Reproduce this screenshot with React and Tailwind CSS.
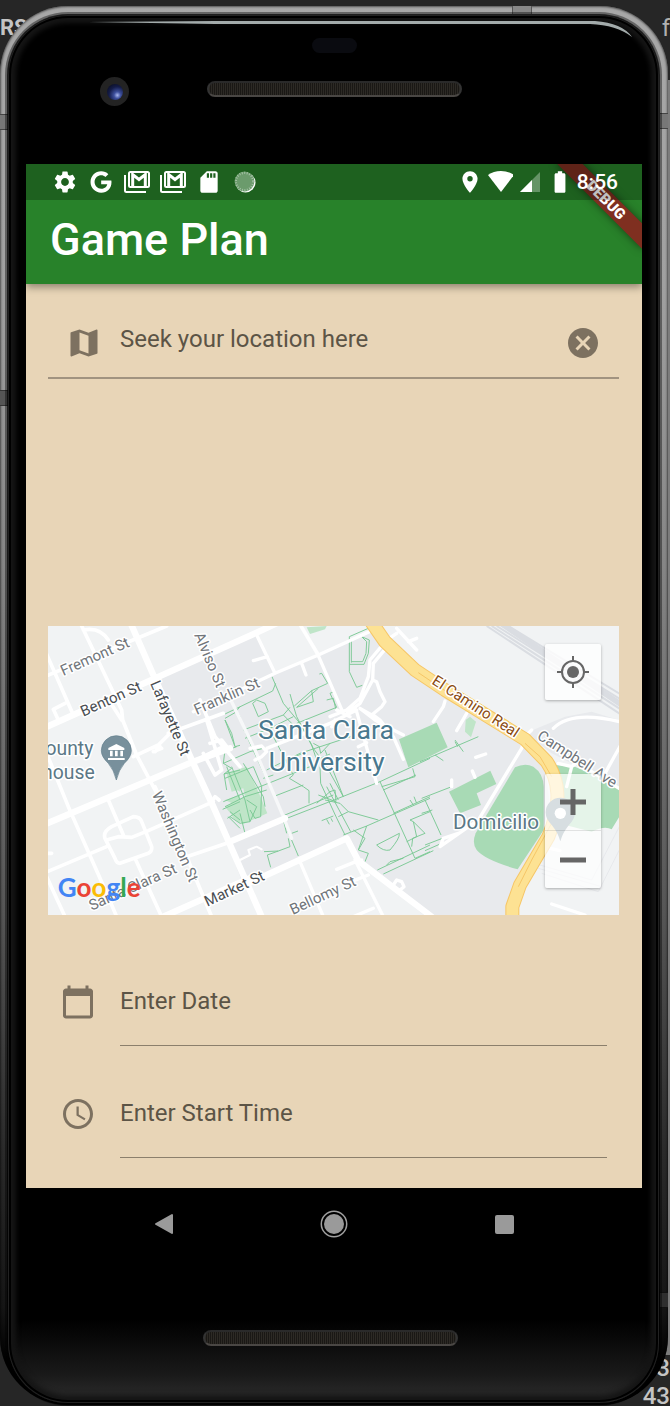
import React from "react";
import {
  MdSettings,
  MdSdCard,
  MdLocationOn,
  MdBatteryFull,
  MdMap,
  MdCancel,
  MdCalendarToday,
  MdAccessTime,
} from "react-icons/md";
import { FaGoogle } from "react-icons/fa";

function GmailStack() {
  return (
    <svg viewBox="0 0 26 22" className="h-[22px] w-[26px] shrink-0">
      <path d="M1 4v15.500q0 1.500 1.500 1.500H22" fill="none" stroke="white" strokeWidth="2" />
      <rect x="5" y="1" width="20" height="15" rx="1.500" fill="none" stroke="white" strokeWidth="2" />
      <path d="M8.700 15V3.500L15 8.500 21.300 3.500V15" fill="none" stroke="white" strokeWidth="3" />
    </svg>
  );
}

function SyncDisc() {
  return (
    <svg viewBox="0 0 26 26" className="h-[26px] w-[26px] shrink-0">
      <circle cx="13.500" cy="13.500" r="10" fill="white" />
      <circle cx="12.500" cy="12.500" r="9.900" fill="#6b9b6c" />
      <circle cx="12.500" cy="12.500" r="8.600" fill="none" stroke="#a4c1a5" strokeWidth="2.200" strokeDasharray="1 1.500" />
    </svg>
  );
}

function StatusBar() {
  return (
    <div className="relative z-10 flex h-9 items-center justify-between bg-black/25 pl-[26px] pr-6 text-white">
      <div className="flex items-center gap-[10px]">
        <MdSettings size={26} />
        <span className="flex w-[26px] justify-center">
          <FaGoogle size={22} />
        </span>
        <GmailStack />
        <GmailStack />
        <MdSdCard size={26} />
        <SyncDisc />
      </div>
      <div className="flex items-center gap-1">
        <MdLocationOn size={26} />
        <svg viewBox="0 0 26 26" className="h-[26px] w-[26px]">
          <path d="M1 6Q6.500 2 14 2T27 6L14 23z" fill="white" />
        </svg>
        <svg viewBox="0 0 26 26" className="h-[26px] w-[26px]">
          <path d="M23 3v20H3z" fill="#659466" />
          <path d="M15 11v12H3z" fill="white" />
        </svg>
        <MdBatteryFull size={26} />
        <span className="text-[21px] font-medium leading-6">8:56</span>
      </div>
    </div>
  );
}

function Header() {
  return (
    <header className="relative z-10 bg-[#28822a] shadow-[0_3px_8px_rgba(0,0,0,0.4)]">
      <div className="absolute inset-0 overflow-hidden">
        <div className="absolute -right-6 top-[27px] h-[18px] w-[120px] rotate-45 bg-[#7f2f20] text-center text-[15px] font-black leading-[18px] text-white shadow-[0_0_9px_rgba(0,0,0,0.5)]">
          DEBUG
        </div>
      </div>
      <StatusBar />
      <h1 className="flex h-[84px] items-center px-6 pb-1 text-[45px] font-medium leading-[52px] text-white">Game Plan</h1>
    </header>
  );
}

function Label({ x, y, r, size = 45, fill = "#70757a", children, anchor = "start" }) {
  return (
    <text
      x={x}
      y={y}
      transform={`rotate(${r || 0} ${x} ${y})`}
      fontSize={size}
      fill={fill}
      stroke="white"
      strokeWidth="9"
      strokeLinejoin="round"
      paintOrder="stroke"
      textAnchor={anchor}
    >
      {children}
    </text>
  );
}

/* The drawing works in thirds of a pixel, split in west, centre and east sheets. */
function CampusMap() {
  return (
    <svg
      viewBox="0 0 1713 867"
      preserveAspectRatio="xMidYMid slice"
      className="block h-full w-full"
      role="img"
      aria-label="Map around Santa Clara University"
    >
      <rect width="1713" height="867" fill="#f1f3f4" />
      <g transform="translate(546 -18)">
        <path
          d="M-232 170L30 62 80 45 135 155 262 105 440 28 600 180 940 390 960 560 850 900H600L385 725 350 655 40 795-20 640-130 400z"
          fill="#e8eaed"
        />
      </g>
      <g transform="translate(1131 -18)">
        <path d="M300 340L420 290 500 275 583 300V520L540 480 380 400z" fill="#e8eaed" />
        <g fill="none" stroke="#dadde2" strokeWidth="6">
          <path d="M185 18L590 285M200 18L590 270M215 18L590 255M232 18L590 240M250 18L590 225" />
        </g>
        <path d="M225 18h30L590 245v20z" fill="#dadde2" />
        <path d="M340 745L530 800M345 735L500 780 583 620M350 760L520 815 583 690" fill="none" stroke="#e2e4e8" strokeWidth="2" />
      </g>

      {/* parks */}
      <g fill="#a8dab5">
        <path transform="translate(1131 -18)" d="M-78 358L35 308 68 382-50 442zM72 515L196 452 214 492 155 520 168 555 105 580z" />
        <path
          transform="translate(1131 -18)"
          d="M270 442Q300 428 325 440 355 460 356 500V630L278 748Q180 720 155 690 140 670 152 640z"
        />
        <path transform="translate(1131 -18)" d="M390 435L450 440 540 480 583 510V590L560 628Q540 615 500 635L400 610z" />
      </g>
      <g fill="#bfe5c8">
        <path transform="translate(1131 -18)" d="M122 300L135 290 153 305 138 352 120 335z" />
        <path transform="translate(546 -18)" d="M230 22L290 18 285 28 240 42z" />
        <path transform="translate(546 -18)" d="M-10 460L50 440 85 515 112 580 40 612 10 590-15 560 45 530 40 505 5 515z" />
        <path transform="translate(-24 -18)" d="M560 455H600V515L580 505zM555 540L600 525V560zM575 590L600 580V610z" />
      </g>

      {/* walking paths */}
      <g transform="translate(546 -18)" fill="none" stroke="#78c892" strokeWidth="2.800">
        <path d="M358 133V50L415 25M364 128V60M358 133H402L415 100 418 60 395 50 410 65 408 100 398 125H364M358 133V155L380 202 397 196" />
        <path d="M-15 282L128 213 137 190M126 170L160 250 210 310 250 385 290 440 340 530M180 222L188 250 200 290 245 375M193 258L245 212 293 190 275 160 268 162M245 212L250 245 200 262 265 205" />
        <path d="M15 262L60 370 135 532M-15 300L5 340 15 380M40 330L160 285 180 262M68 250L85 290 115 275 105 250 80 240 68 250M45 355L120 325 190 290M160 285L215 340M200 310L320 262 300 220 312 215M290 240L310 235 318 270M110 450L210 400 362 350M100 475L130 465M-20 430L60 395 120 380M130 350L190 465 178 475 220 500 237 512V550M160 425L230 395" />
        <path d="M250 370L268 380 272 400 300 370M245 375L260 420 300 402M270 440L272 490 318 590 345 645M290 500L362 635M300 490L325 540M260 550L300 515 315 510 318 545 265 525M285 540L330 550 355 575 445 600" />
        <path d="M-20 545L90 500 240 440M130 530L220 495M165 585L310 525M165 597L325 535 450 485 600 415M285 390L340 530" />
        <path d="M450 485L555 715M455 500L555 470 548 445M460 510L558 465M490 580L600 530M355 575L325 590M340 645L410 618 600 535M370 630L405 655 385 690 415 700 405 725" />
        <path d="M410 618L385 690M440 675L508 640Q510 655 480 690 460 695 440 675M442 750L600 675M460 762L610 692M530 665L560 650 550 605 540 600 600 575M550 605L585 640 548 655 545 680M555 715L600 695M540 540L550 555M552 530L560 550M470 735L480 725 520 715" />
        <path d="M275 602L310 588M290 598L298 613M303 595L308 605M170 625L205 708M185 640L204 633M175 655L180 680 145 693 112 705 122 742M102 695L145 693M155 580L170 640" />
        <path d="M5 440L45 540 60 605M-15 475L70 440 95 500 92 590 75 595 60 570M40 430L100 530 105 560M0 590L30 610 60 605 80 560 50 540M-15 560L45 530 110 510M30 580L45 640" />
      </g>
      <g transform="translate(-24 -18)" fill="none" stroke="#78c892" strokeWidth="2.800">
        <path d="M555 295L585 278 600 260M555 300L585 380 600 376M585 265L600 290M555 390L550 430 575 445 552 462 560 510M590 380L550 395M552 462L600 450M560 440L600 540M548 568L600 545M562 595L600 570M565 590L600 625M570 575L600 600" />
      </g>
      <g transform="translate(1131 -18)" fill="none" stroke="#78c892" strokeWidth="2.800">
        <path d="M-15 425L160 350M90 360L115 395M90 365L98 380M30 405L55 422M-10 535L75 502M0 540L48 645M-10 580L22 570M0 675L52 655M0 692L50 670" />
      </g>

      {/* minor streets */}
      <g transform="translate(-24 -18)" fill="none" stroke="white" strokeWidth="11" strokeLinecap="round" strokeLinejoin="round">
        <path d="M125 18L245 270 248 300 290 405 345 510 360 540M345 500L440 710 515 890M10 80L100 285M130 30Q180 20 205 60M25 165L380 18M40 268L75 250M40 268L55 300M20 400L85 560 200 820 230 890M10 760L200 680M205 540L250 645M20 770L75 890" />
        <path d="M215 620L280 590Q300 590 305 605L335 680Q337 695 325 700L240 730Q230 730 225 715L195 655Q188 635 215 620M200 660L235 650 275 652 325 632 520 545M285 715L365 890M200 230L245 300M440 710L560 670 640 635M515 545L525 530 537 540M280 410L355 375 385 345M20 700H35M385 340L550 280M480 240L525 350 600 440M340 395L365 385M345 395L360 380M470 420L550 380M500 300L545 450 525 465 490 400M510 370L545 360 560 380M500 410L530 400" />
      </g>
      <g transform="translate(546 -18)" fill="none" stroke="white" strokeWidth="10" strokeLinecap="round" strokeLinejoin="round">
        <path d="M5 245L75 390 160 590 185 655" stroke="#f7f8f9" />
        <path d="M-110 275L135 160 265 105 430 30M80 45L135 160M70 122L112 110M215 130L228 165M262 100L340 280M60 385L95 378 110 395 95 410 75 420M110 385L300 310 380 270M300 290L350 270 390 235 415 170 420 120 470 60 500 40M345 285L390 250 428 180 430 130 480 70M428 180L440 185 450 215 465 245 455 260 425 285 390 265 435 300 480 325 520 345M380 275L440 490M430 285L450 300 490 350 520 418M385 380L410 368M320 270L360 290M500 25L560 90M535 65L560 55M305 320L315 300" />
        <path d="M30 720L60 705 55 690 80 680 95 688" strokeWidth="6" />
        <path d="M210 725L280 890M320 748L370 728 395 720M375 720L460 890M350 790L415 765M370 890L430 865M490 795L500 780 515 785 522 800 510 810" />
      </g>
      <g transform="translate(1131 -18)" fill="none" stroke="white" strokeWidth="10" strokeLinecap="round" strokeLinejoin="round">
        <path d="M25 305L55 260 60 243M95 332L125 280M152 412L182 402M142 453L150 472M80 480V500M290 385L190 550 160 600 45 680 55 655 100 640M320 330L300 350 290 385M385 325Q440 270 583 305M410 400L590 510M400 430L440 440 460 425M440 440L425 500M540 460L590 370M380 852L480 885M375 685L405 692" />
      </g>
      {/* main streets */}
      <g fill="none" stroke="white" strokeLinecap="round" strokeLinejoin="round">
        <path transform="translate(-24 -18)" d="M10 325L345 175 650 38 720 5M270 5L340 165 460 430 520 560 665 890M10 615L460 425 570 385M370 890L640 770M570 665L735 595" strokeWidth="19" />
        <path transform="translate(546 -18)" d="M0 815L350 655 385 722 605 890" strokeWidth="19" />
        <path transform="translate(546 -18)" d="M205 5L265 105" strokeWidth="11" />
      </g>

      {/* El Camino Real */}
      <g transform="translate(1131 -18)" fill="none" strokeLinejoin="round">
        <path d="M-165 0L-120 65-30 150 60 210 300 358 365 425Q395 470 397 520 400 580 370 650L285 795 262 860V900" stroke="#f6c667" strokeWidth="42" />
        <path d="M-165 0L-120 65-30 150 60 210 300 358 365 425Q395 470 397 520 400 580 370 650L285 795 262 860V900" stroke="#fde293" strokeWidth="36" />
        <path d="M-20 158L60 212M300 370L345 410 380 470M385 600L320 720 280 800" stroke="#f6c667" strokeWidth="3" />
      </g>

      {/* place pins */}
      <g transform="translate(-24 -18)">
        <path d="M229 480Q222 450 205 430 184 410 184 392A45 45 0 0 1 274 392Q274 410 253 430 236 450 229 480z" fill="#78909c" stroke="#607d8b" strokeWidth="2" />
        <path d="M205 384L229 372 253 384V390H205zM210 392H218V409H210zM225 392H233V409H225zM241 392H249V409H241zM204 414H254V420H204z" fill="white" />
      </g>
      <g transform="translate(1131 -18)">
        <path d="M406 664Q400 640 382 617 362 598 362 577A44 44 0 0 1 450 577Q450 598 430 617 412 640 406 664z" fill="#78909c" />
        <circle cx="406" cy="580" r="17" fill="white" />
      </g>

      <g fontFamily="Roboto, sans-serif">
        <g transform="translate(-24 -18)">
          <Label x={70} y={168} r={-24}>Fremont St</Label>
          <Label x={130} y={290} r={-24} fill="#4a4e52">Benton St</Label>
          <Label x={330} y={190} r={67} fill="#4a4e52">Lafayette St</Label>
          <Label x={462} y={45} r={67}>Alviso St</Label>
          <Label x={470} y={285} r={-24}>Franklin St</Label>
          <Label x={335} y={522} r={67}>Washington St</Label>
          <Label x={155} y={872} r={-24}>Santa Clara St</Label>
          <Label x={502} y={860} r={-25} fill="#4a4e52">Market St</Label>
          <Label x={160} y={405} size={58} fill="#5b7886" anchor="end">County</Label>
          <Label x={164} y={478} size={58} fill="#5b7886" anchor="end">Courthouse</Label>
        </g>
        <g transform="translate(546 -18)">
          <Label x={288} y={357} size={80} fill="#49788e" anchor="middle">Santa Clara</Label>
          <Label x={290} y={453} size={80} fill="#49788e" anchor="middle">University</Label>
          <Label x={188} y={885} r={-25}>Bellomy St</Label>
        </g>
        <g transform="translate(1131 -18)">
          <Label x={18} y={190} r={33} fill="#8a4b10">El Camino Real</Label>
          <Label x={334} y={355} r={33}>Campbell Ave</Label>
          <Label x={84} y={627} size={62} fill="#5b7886">Domicilio</Label>
        </g>
        <g transform="translate(-24 -18)" fontSize="78" fontWeight="700" fontFamily="Lato, sans-serif">
          <text x="53" y="830">
            <tspan fill="#4285f4">G</tspan>
            <tspan fill="#ea4335">o</tspan>
            <tspan fill="#fbbc05">o</tspan>
            <tspan fill="#4285f4">g</tspan>
            <tspan fill="#34a853">l</tspan>
            <tspan fill="#ea4335">e</tspan>
          </text>
        </g>
      </g>
    </svg>
  );
}

function MapPanel() {
  return (
    <section className="relative mt-[247px] h-[289px] overflow-hidden">
      <CampusMap />
      <button
        type="button"
        aria-label="My location"
        className="absolute right-[18px] top-[18px] flex size-14 items-center justify-center rounded-xs bg-white/80 shadow-[0_1px_3px_rgba(0,0,0,0.3)]"
      >
        <svg viewBox="0 0 32 32" className="size-8">
          <circle cx="16" cy="16" r="11" fill="none" stroke="#666" strokeWidth="2" />
          <circle cx="16" cy="16" r="6" fill="#666" />
          <path d="M16 0v5M16 27v5M0 16h5M27 16h5" stroke="#666" strokeWidth="2" />
        </svg>
      </button>
      <div className="absolute bottom-[27px] right-[18px] flex flex-col rounded-xs shadow-[0_1px_3px_rgba(0,0,0,0.3)]">
        <button type="button" aria-label="Zoom in" className="flex h-[57px] w-14 items-center justify-center rounded-t-xs border-b border-black/10 bg-white/70">
          <svg viewBox="0 0 26 26" className="size-[26px]">
            <path d="M13 0v26M0 13h26" stroke="#666" strokeWidth="5" />
          </svg>
        </button>
        <button type="button" aria-label="Zoom out" className="flex h-[57px] w-14 items-center justify-center rounded-b-xs bg-white/70">
          <svg viewBox="0 0 26 26" className="size-[26px]">
            <path d="M0 13h26" stroke="#666" strokeWidth="5" />
          </svg>
        </button>
      </div>
    </section>
  );
}

function EntryRow({ id, icon, label }) {
  return (
    <div className="flex items-center gap-6 px-3">
      <label htmlFor={id} className="text-[#7d7160]">
        {icon}
      </label>
      <input
        id={id}
        type="text"
        aria-label={label}
        placeholder={label}
        className="h-[89px] min-w-0 flex-1 border-b border-[#8b7f6c] bg-transparent text-2xl text-[#5c5446] outline-none placeholder:text-[#5c5446] placeholder:opacity-100"
      />
    </div>
  );
}

function Grille() {
  return (
    <div className="h-4 w-[255px] rounded-full border-2 border-t-[#2a2a2a] border-x-[#333] border-b-[#4a4744] bg-[repeating-linear-gradient(90deg,#2d2a25_0px,#2d2a25_1px,#1a1815_1px,#1a1815_2px)]" />
  );
}

function Screen() {
  return (
    <main className="flex flex-col bg-[#e8d5b7]">
      <Header />
      <div className="flex flex-col pb-[30px] pl-[22px] pr-[23px] pt-6">
        <div className="flex h-[71px] items-center gap-[18px] border-b-2 border-[#a19380] px-[18px]">
          <label htmlFor="place" className="text-[#7d7160]">
            <MdMap size={36} />
          </label>
          <input
            id="place"
            type="text"
            aria-label="Seek your location here"
            placeholder="Seek your location here"
            className="h-full min-w-0 flex-1 bg-transparent pb-2 text-2xl text-[#5c5446] outline-none placeholder:text-[#5c5446] placeholder:opacity-100"
          />
          <button type="button" aria-label="Clear location" className="text-[#7d7160]">
            <MdCancel size={36} />
          </button>
        </div>
        <MapPanel />
        <div className="mt-[42px] flex flex-col gap-[23px]">
          <EntryRow id="date" label="Enter Date" icon={<MdCalendarToday size={36} />} />
          <EntryRow id="start" label="Enter Start Time" icon={<MdAccessTime size={36} />} />
        </div>
      </div>
    </main>
  );
}

function NavBar() {
  return (
    <nav className="flex h-[72px] items-center justify-center gap-[122px]">
      <button type="button" aria-label="Back" className="flex size-12 items-center justify-center">
        <svg viewBox="0 0 20 22" className="h-[22px] w-5">
          <path d="M2 11L18 2v18z" fill="#9a9a9a" stroke="#9a9a9a" strokeWidth="2" strokeLinejoin="round" />
        </svg>
      </button>
      <button type="button" aria-label="Home" className="flex size-12 items-center justify-center">
        <svg viewBox="0 0 28 28" className="size-7">
          <circle cx="14" cy="14" r="12.700" fill="none" stroke="#a0a0a0" strokeWidth="1.500" />
          <circle cx="14" cy="14" r="10" fill="#9a9a9a" />
        </svg>
      </button>
      <button type="button" aria-label="Recent apps" className="flex size-12 items-center justify-center">
        <span className="size-[19px] rounded-xs bg-[#9a9a9a]" />
      </button>
    </nav>
  );
}

export default function App() {
  return (
    <div className="relative min-h-screen overflow-hidden bg-[#262626] pr-0.5 pt-1.5 font-[Roboto,sans-serif]">
      <span className="absolute left-0 top-4 text-[22px] font-bold leading-6 text-[#c4c4c4]">RS</span>
      <span className="absolute right-0 top-4 text-2xl leading-6 text-[#b0b0b0]">f</span>
      <span className="absolute right-0 top-20 h-[1275px] w-3 bg-[#7c7c7c]" />
      <div className="absolute -bottom-1 right-0 flex flex-col text-right text-2xl font-medium leading-7 text-[#c4c4c4]">
        <span>3</span>
        <span>43</span>
      </div>

      <div className="relative rounded-[68px] bg-[linear-gradient(180deg,#a8a8a8_0%,#a0a0a0_20%,#858585_40%,#555_65%,#2a2a2a_82%,#151515_93%,#000_97%)] pb-0.5 pl-2 pr-[9px] pt-[9px] shadow-[inset_0_0_2px_1px_rgba(0,0,0,0.5)]">
        <span className="absolute left-0 top-[108px] h-4 w-2 border-y border-[#444] bg-[#777]" />
        <span className="absolute left-0 top-96 h-4 w-2 border-y border-[#333] bg-[#555]" />
        <span className="absolute right-0 top-[107px] h-4 w-2 border-y border-[#444] bg-[#777]" />
        <span className="absolute right-0 top-[1286px] h-4 w-2 border-y border-[#111] bg-[#2f2f2f]" />
        <span className="absolute right-[136px] top-0 h-2 w-5 border-x border-[#555] bg-[#888]" />

        <div className="relative overflow-hidden rounded-[60px] bg-[linear-gradient(180deg,#000_0%,#000_94%,#1a1a1a_98%,#2e2e2e_100%)] pl-[18px] pr-[17px] shadow-[0_0_0_1px_rgba(0,0,0,0.7),0_0_0_3px_rgba(0,0,0,0.4),inset_0_0_0_1px_#222,inset_0_0_0_3px_#000,inset_0_0_5px_8px_#151515]">
          <svg viewBox="0 0 560 18" preserveAspectRatio="none" className="absolute left-20 right-[26px] top-[5px] h-[18px] w-[546px]">
            <path d="M0 2L130 1H520Q548 3 558 17 542 5 515 4H130z" fill="#a3abab" />
          </svg>
          <div className="relative flex h-[149px] justify-center">
            <div className="absolute left-[74px] top-[62px] flex size-[29px] items-center justify-center rounded-full bg-[#232323]">
              <div className="size-4 rounded-full bg-[radial-gradient(circle_at_65%_70%,#a9b8f0_0%,#3d4f9c_22%,#141c48_55%,#06070f_100%)]" />
            </div>
            <div className="flex flex-col items-center gap-7 pt-[23px]">
              <div className="h-[15px] w-[45px] rounded-full bg-[#0a0b10]" />
              <Grille />
            </div>
          </div>
          <Screen />
          <NavBar />
          <div className="flex h-[143px] justify-center pr-2 pt-[70px]">
            <Grille />
          </div>
        </div>
      </div>
    </div>
  );
}
